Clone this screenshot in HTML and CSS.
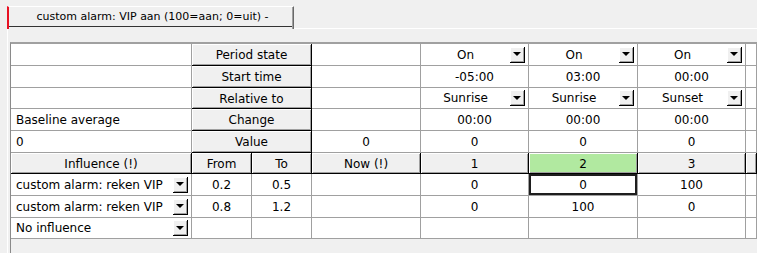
FILE: index.html
```html
<!DOCTYPE html>
<html lang="nl">
<head>
  <meta charset="UTF-8" />
  <title>custom alarm</title>
  <link rel="stylesheet" href="styles.css">
</head>
<body>

  <div class="tabs">
    <div class="tab"><span>custom alarm: VIP aan (100=aan; 0=uit) -</span></div>
    <div class="tabs-rest"></div>
  </div>

  <div class="panel">
    <div class="grid">
      <!-- period rows -->
      <div class="c"></div>
      <div class="c btn span2">Period state</div>
      <div class="c"></div>
      <div class="c dd"><span>On</span><i class="arrow"></i></div>
      <div class="c dd"><span>On</span><i class="arrow"></i></div>
      <div class="c dd"><span>On</span><i class="arrow"></i></div>
      <div class="c"></div>

      <div class="c"></div>
      <div class="c btn span2">Start time</div>
      <div class="c"></div>
      <div class="c">-05:00</div>
      <div class="c">03:00</div>
      <div class="c">00:00</div>
      <div class="c"></div>

      <div class="c"></div>
      <div class="c btn span2">Relative to</div>
      <div class="c"></div>
      <div class="c dd"><span>Sunrise</span><i class="arrow"></i></div>
      <div class="c dd"><span>Sunrise</span><i class="arrow"></i></div>
      <div class="c dd"><span>Sunset</span><i class="arrow"></i></div>
      <div class="c"></div>

      <div class="c left">Baseline average</div>
      <div class="c btn span2">Change</div>
      <div class="c"></div>
      <div class="c">00:00</div>
      <div class="c">00:00</div>
      <div class="c">00:00</div>
      <div class="c"></div>

      <div class="c left">0</div>
      <div class="c btn span2">Value</div>
      <div class="c">0</div>
      <div class="c">0</div>
      <div class="c">0</div>
      <div class="c">0</div>
      <div class="c"></div>

      <!-- influence header -->
      <div class="c btn">Influence (!)</div>
      <div class="c btn">From</div>
      <div class="c btn">To</div>
      <div class="c btn">Now (!)</div>
      <div class="c btn">1</div>
      <div class="c btn active">2</div>
      <div class="c btn">3</div>
      <div class="c btn"></div>

      <!-- influence rows -->
      <div class="c dd left"><span>custom alarm: reken VIP</span><i class="arrow"></i></div>
      <div class="c">0.2</div>
      <div class="c">0.5</div>
      <div class="c"></div>
      <div class="c">0</div>
      <div class="c selected">0</div>
      <div class="c">100</div>
      <div class="c"></div>

      <div class="c dd left"><span>custom alarm: reken VIP</span><i class="arrow"></i></div>
      <div class="c">0.8</div>
      <div class="c">1.2</div>
      <div class="c"></div>
      <div class="c">0</div>
      <div class="c">100</div>
      <div class="c">0</div>
      <div class="c"></div>

      <div class="c dd left"><span>No influence</span><i class="arrow"></i></div>
      <div class="c"></div>
      <div class="c"></div>
      <div class="c"></div>
      <div class="c"></div>
      <div class="c"></div>
      <div class="c"></div>
      <div class="c"></div>
    </div>
  </div>

</body>
</html>
```

FILE: styles.css
```css
body {
  margin: 0;
  background: #f0f0f0;
  font-family: "DejaVu Sans", sans-serif;
  font-size: 12px;
  color: #000;
  overflow: hidden;
  height: 253px;
}
.tabs {
  display: flex;
  align-items: flex-end;
  height: 29px;
}
.tab {
  margin-left: 7px;
  width: 287px;
  height: 23px;
  box-sizing: border-box;
  border-top: 1px solid #fff;
  border-left: 2px solid #e81123;
  border-right: 1px solid #696969;
  box-shadow: inset -1px 0 0 #a0a0a0;
}
.tab span {
  display: block;
  height: 19px;
  line-height: 19px;
  font-size: 11px;
  text-align: center;
  border-bottom: 1px solid #333;
  margin-right: 1px;
  padding-left: 4px;
}
.tabs-rest {
  flex: 1;
  border-bottom: 1px solid #fff;
}
.panel {
  margin-left: 7px;
  border-left: 1px solid #fff;
  padding: 13px 0 0 2px;
  height: 224px;
  box-sizing: border-box;
  overflow: hidden;
}
.grid {
  display: grid;
  grid-template-columns: 181px 60px 60px 109px 108px 109px 108px 1fr;
  grid-template-rows: 22px 22px 21px 22px 22px 21px 22px 22px 21px;
  height: 100%;
  box-sizing: border-box;
  border-top: 2px solid #a0a0a0;
  border-left: 1px solid #8a8a8a;
  align-content: start;
}
.c {
  box-sizing: border-box;
  background: #fff;
  border-right: 1px solid #a0a0a0;
  border-bottom: 1px solid #a0a0a0;
  text-align: center;
  line-height: 21px;
  padding-top: 1px;
  white-space: nowrap;
  overflow: hidden;
}
.left {
  text-align: left;
  padding-left: 5px;
}
.span2 {
  grid-column: span 2;
}
.btn {
  background: #f0f0f0;
  border-right-color: #000;
  border-bottom-color: #000;
  box-shadow: inset 1px 1px 0 #fff, inset -1px -1px 0 #a0a0a0;
}
.btn.active {
  background: #b1e9a0;
}
.selected {
  box-shadow: inset 0 0 0 2px #1e1e1e;
}
.dd {
  display: flex;
  align-items: center;
  padding-top: 0;
}
.dd span {
  flex: 1;
  padding-top: 1px;
}
.arrow {
  width: 15px;
  height: 16px;
  margin-right: 3px;
  box-sizing: border-box;
  background: #f0f0f0;
  border-right: 1px solid #000;
  border-bottom: 1px solid #000;
  box-shadow: inset 1px 1px 0 #fff, inset -1px -1px 0 #a0a0a0;
  display: flex;
  align-items: center;
  justify-content: center;
}
.arrow::after {
  content: "";
  border-left: 4px solid transparent;
  border-right: 4px solid transparent;
  border-top: 4px solid #000;
}
```
